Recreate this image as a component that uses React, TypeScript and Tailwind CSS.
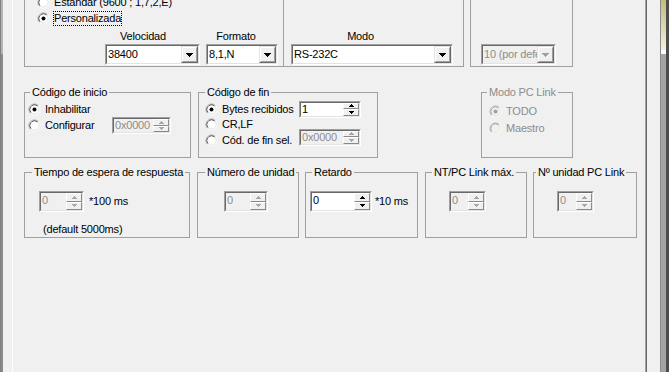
import type { ReactNode } from "react";

const DIS = "text-[#8d8d8d]";

function Radio({ checked = false, disabled = false }: { checked?: boolean; disabled?: boolean }) {
  return (
    <svg width="13" height="13" viewBox="0 0 13 13" className="shrink-0">
      <path d="M2.61 10.39A5.5 5.5 0 0 1 10.39 2.61" fill="none" stroke={disabled ? "#b4b4b4" : "#a0a0a0"} />
      <path d="M10.39 2.61A5.5 5.5 0 0 1 2.61 10.39" fill="none" stroke="#ffffff" />
      <path d="M3.32 9.68A4.5 4.5 0 0 1 9.68 3.32" fill="none" stroke={disabled ? "#9a9a9a" : "#404040"} />
      <path d="M9.68 3.32A4.5 4.5 0 0 1 3.32 9.68" fill="none" stroke="#e3e3e3" />
      <circle cx="6.5" cy="6.5" r="4" fill={disabled ? "#f0f0f0" : "#ffffff"} />
      {checked && <circle cx="6.5" cy="6.5" r="2" fill={disabled ? "#a0a0a0" : "#000000"} />}
    </svg>
  );
}

function DownArrow({ color }: { color: string }) {
  return (
    <svg width="7" height="4" viewBox="0 0 7 4" shapeRendering="crispEdges">
      <path d="M0 0h7v1H0zM1 1h5v1H1zM2 2h3v1H2zM3 3h1v1H3z" fill={color} />
    </svg>
  );
}

function SmallArrow({ up, color }: { up: boolean; color: string }) {
  return (
    <svg width="5" height="3" viewBox="0 0 5 3" shapeRendering="crispEdges">
      <path d={up ? "M2 0h1v1H2zM1 1h3v1H1zM0 2h5v1H0z" : "M0 0h5v1H0zM1 1h3v1H1zM2 2h1v1H2z"} fill={color} />
    </svg>
  );
}

function Sunken({ className = "", disabled = false, children }: { className?: string; disabled?: boolean; children: ReactNode }) {
  return (
    <div className={`shrink-0 border border-t-[#a0a0a0] border-l-[#a0a0a0] border-r-white border-b-white ${className}`}>
      <div
        className={`h-full flex border border-t-[#696969] border-l-[#696969] border-r-[#e3e3e3] border-b-[#e3e3e3] ${
          disabled ? "bg-[#f0f0f0]" : "bg-white"
        }`}
      >
        {children}
      </div>
    </div>
  );
}

function Raised({ className = "", children }: { className?: string; children: ReactNode }) {
  return (
    <div className={`border border-t-[#e3e3e3] border-l-[#e3e3e3] border-r-[#696969] border-b-[#696969] ${className}`}>
      <div className="h-full w-full flex items-center justify-center bg-[#f0f0f0] border border-t-white border-l-white border-r-[#a0a0a0] border-b-[#a0a0a0]">
        {children}
      </div>
    </div>
  );
}

function Combo({ value, className, disabled = false }: { value: string; className: string; disabled?: boolean }) {
  return (
    <Sunken className={`h-[21px] ${className}`} disabled={disabled}>
      <div className={`flex-1 overflow-hidden whitespace-nowrap pl-[1px] leading-[17px] ${disabled ? DIS : ""}`}>{value}</div>
      <Raised className="w-[17px] h-full shrink-0">
        <DownArrow color={disabled ? "#a0a0a0" : "#000000"} />
      </Raised>
    </Sunken>
  );
}

function Spin({ value, className, disabled = false, tall = false }: { value: string; className: string; disabled?: boolean; tall?: boolean }) {
  const color = disabled ? "#a6a6a6" : "#000000";
  return (
    <Sunken className={className} disabled={disabled}>
      <div className={`flex-1 overflow-hidden whitespace-nowrap pl-[1px] ${tall ? "pt-[1px]" : ""} ${disabled ? DIS : ""}`}>{value}</div>
      <div className="w-[16px] shrink-0 flex flex-col">
        <div className="flex-1 flex items-center justify-center overflow-hidden bg-[#f0f0f0] border border-t-white border-l-white border-r-[#8a8a8a] border-b-[#8a8a8a]">
          <SmallArrow up color={color} />
        </div>
        <div className="flex-1 flex items-center justify-center overflow-hidden bg-[#f0f0f0] border border-t-white border-l-white border-r-[#8a8a8a] border-b-[#8a8a8a]">
          <SmallArrow up={false} color={color} />
        </div>
      </div>
    </Sunken>
  );
}

function Group({ title, className, legend, disabled = false, children }: { title: string; className: string; legend: string; disabled?: boolean; children: ReactNode }) {
  return (
    <fieldset className={`shrink-0 h-[72px] border border-[#a0a0a0] ${className}`}>
      <legend className={`px-[2px] leading-[13px] ${legend} ${disabled ? DIS : ""}`}>{title}</legend>
      <div className="flex flex-col">{children}</div>
    </fieldset>
  );
}

export default function App() {
  return (
    <div className="w-[669px] h-[372px] overflow-hidden flex bg-[#f0f0f0] text-black text-[11px] leading-[13px] tracking-[-0.2px] font-['Liberation_Sans',Arial,sans-serif]">
      {/* window frame, left */}
      <div className="w-[3px] flex flex-col border-l border-l-[#808080]">
        <div className="h-[54px] bg-[#b4b4b4]" />
        <div className="flex-1 bg-[#8a8a8a]" />
      </div>
      <div className="w-[9px]" />

      {/* tab page */}
      <div className="w-[635px] h-full border-l border-l-white border-r border-r-[#696969]">
        <div className="h-full border-r border-r-[#a0a0a0] pl-[11px]">
          {/* top row, cut at the top edge */}
          <div className="flex items-start h-[67px]">
            <div className="w-[260px] h-[67px] shrink-0 border-x border-b border-[#a0a0a0] flex flex-col">
              <div className="-mt-[6px] h-[16px] flex items-center pl-[12px]">
                <Radio />
                <span className="ml-[4px] whitespace-nowrap">Estandar (9600 ; 1,7,2,E)</span>
              </div>
              <div className="h-[16px] flex items-center pl-[12px]">
                <Radio checked />
                <span className="ml-[3px] border border-dotted border-black">Personalizada</span>
              </div>
              <div className="mt-[4px] h-[13px] flex">
                <div className="ml-[80px] w-[76px] text-center">Velocidad</div>
                <div className="ml-[25px] w-[60px] text-center">Formato</div>
              </div>
              <div className="mt-[1px] flex">
                <Combo value="38400" className="ml-[80px] w-[95px]" />
                <Combo value="8,1,N" className="ml-[6px] w-[72px]" />
              </div>
            </div>
            <div className="w-[180px] h-[67px] shrink-0 border-r border-b border-[#a0a0a0] flex flex-col">
              <div className="mt-[30px] h-[13px] ml-[7px] w-[139px] text-center">Modo</div>
              <div className="mt-[1px] flex">
                <Combo value="RS-232C" className="ml-[7px] w-[162px]" />
              </div>
            </div>
            <div className="ml-[6px] w-[103px] h-[67px] shrink-0 border-x border-b border-[#a0a0a0] flex flex-col">
              <div className="mt-[44px] flex">
                <Combo value="10 (por defecto)" className="ml-[10px] w-[75px]" disabled />
              </div>
            </div>
          </div>

          {/* middle row */}
          <div className="mt-[19px] flex items-start">
            <Group title="Código de inicio" className="w-[167px]" legend="ml-[5px]">
              <div className="mt-[2px] h-[16px] flex items-center pl-[3px]">
                <Radio checked />
                <span className="ml-[4px]">Inhabilitar</span>
              </div>
              <div className="h-[17px] flex items-center pl-[3px]">
                <Radio />
                <span className="ml-[4px] w-[67px]">Configurar</span>
                <Spin value="0x0000" className="w-[59px] h-[17px]" disabled />
              </div>
            </Group>
            <Group title="Código de fin" className="ml-[7px] w-[180px]" legend="ml-[6px]">
              <div className="mt-[2px] h-[16px] flex items-center pl-[6px]">
                <Radio checked />
                <span className="ml-[4px] w-[77px] whitespace-nowrap">Bytes recibidos</span>
                <Spin value="1" className="w-[62px] h-[17px]" />
              </div>
              <div className="h-[15px] flex items-center pl-[6px]">
                <Radio />
                <span className="ml-[4px]">CR,LF</span>
              </div>
              <div className="h-[16px] flex items-center pl-[6px]">
                <Radio />
                <span className="ml-[4px] w-[77px] whitespace-nowrap">Cód. de fin sel.</span>
                <Spin value="0x0000" className="w-[62px] h-[17px] mb-[6px]" disabled />
              </div>
            </Group>
            <Group title="Modo PC Link" className="ml-[103px] w-[92px]" legend="ml-[5px]" disabled>
              <div className={`mt-[4px] h-[16px] flex items-center pl-[7px] ${DIS}`}>
                <Radio checked disabled />
                <span className="ml-[4px]">TODO</span>
              </div>
              <div className={`mt-[1px] h-[16px] flex items-center pl-[7px] ${DIS}`}>
                <Radio disabled />
                <span className="ml-[4px]">Maestro</span>
              </div>
            </Group>
          </div>

          {/* bottom row */}
          <div className="mt-[8px] flex items-start">
            <Group title="Tiempo de espera de respuesta" className="w-[166px]" legend="ml-[7px]">
              <div className="mt-[12px] h-[21px] flex items-center pl-[14px]">
                <Spin value="0" className="w-[45px] h-[21px]" disabled tall />
                <span className="ml-[5px]">*100 ms</span>
              </div>
              <div className="mt-[11px] h-[13px] pl-[18px]">(default 5000ms)</div>
            </Group>
            <Group title="Número de unidad" className="ml-[7px] w-[102px]" legend="ml-[7px]">
              <div className="mt-[12px] h-[21px] flex items-center pl-[26px]">
                <Spin value="0" className="w-[44px] h-[21px]" disabled tall />
              </div>
            </Group>
            <Group title="Retardo" className="ml-[6px] w-[113px]" legend="ml-[6px]">
              <div className="mt-[12px] h-[21px] flex items-center pl-[4px]">
                <Spin value="0" className="w-[62px] h-[21px]" tall />
                <span className="ml-[3px]">*10 ms</span>
              </div>
            </Group>
            <Group title="NT/PC Link máx." className="ml-[7px] w-[102px]" legend="ml-[6px]">
              <div className="mt-[12px] h-[21px] flex items-center pl-[23px]">
                <Spin value="0" className="w-[37px] h-[21px]" disabled tall />
              </div>
            </Group>
            <Group title="Nº unidad PC Link" className="ml-[6px] w-[104px]" legend="ml-[2px]">
              <div className="mt-[12px] h-[21px] flex items-center pl-[23px]">
                <Spin value="0" className="w-[37px] h-[21px]" disabled tall />
              </div>
            </Group>
          </div>
        </div>
      </div>

      {/* right edge: neighbouring window border */}
      <div className="w-[13px]" />
      <div className="w-[6px] flex flex-col border-l border-l-[#8a8a8a]">
        <div className="h-[50px] bg-gradient-to-b from-[#c2bc7a] to-[#f2f1e2]" />
        <div className="h-[4px] bg-white" />
        <div className="flex-1 bg-[#a4a4a4]" />
      </div>
      <div className="w-[3px] bg-[#4d4d4d]" />
    </div>
  );
}
